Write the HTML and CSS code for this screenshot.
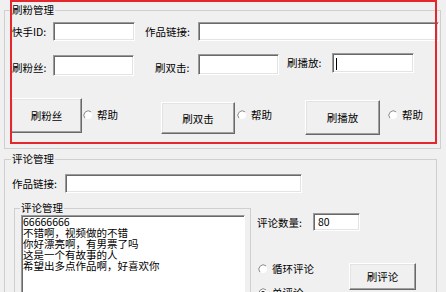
FILE: index.html
```html
<!DOCTYPE html>
<html lang="zh-CN">
<head>
<meta charset="utf-8">
<title>刷粉管理</title>
<link rel="stylesheet" href="styles.css">
</head>
<body>
<div class="page">
  <fieldset class="group group-fans">
    <legend>刷粉管理</legend>
    <div class="row row1">
      <span class="lbl w41">快手ID:</span>
      <span class="input w82 h19"></span>
      <span class="lbl w53 ml10">作品链接:</span>
      <span class="input grow h19"></span>
    </div>
    <div class="row row2">
      <span class="lbl w41 mt8">刷粉丝:</span>
      <span class="input w81 h21 mt2"></span>
      <span class="lbl w43 ml21 mt8">刷双击:</span>
      <span class="input w81 h21 mt1"></span>
      <span class="lbl w45 ml8 mt3">刷播放:</span>
      <span class="input w82 h20"><span class="caret"></span></span>
    </div>
    <div class="row row3">
      <button class="btn b1">刷粉丝</button>
      <span class="radio r1"><svg class="rad" viewBox="0 0 10 10"><circle cx="5" cy="5" r="4" fill="#fff"/><path d="M1.9 8.1 A4.4 4.4 0 0 1 8.1 1.9" fill="none" stroke="#8a8a8a" stroke-width="1"/></svg><span>帮助</span></span>
      <button class="btn b2">刷双击</button>
      <span class="radio r2"><svg class="rad" viewBox="0 0 10 10"><circle cx="5" cy="5" r="4" fill="#fff"/><path d="M1.9 8.1 A4.4 4.4 0 0 1 8.1 1.9" fill="none" stroke="#8a8a8a" stroke-width="1"/></svg><span>帮助</span></span>
      <button class="btn b3">刷播放</button>
      <span class="radio r3"><svg class="rad" viewBox="0 0 10 10"><circle cx="5" cy="5" r="4" fill="#fff"/><path d="M1.9 8.1 A4.4 4.4 0 0 1 8.1 1.9" fill="none" stroke="#8a8a8a" stroke-width="1"/></svg><span>帮助</span></span>
    </div>
  </fieldset>

  <fieldset class="group group-comments">
    <legend>评论管理</legend>
    <div class="row crow1">
      <span class="lbl w53">作品链接:</span>
      <span class="input w237 h19"></span>
    </div>
    <div class="cbody">
      <fieldset class="inner">
        <legend>评论管理</legend>
        <textarea class="memo" readonly>66666666
不错啊，视频做的不错
你好漂亮啊，有男票了吗
这是一个有故事的人
希望出多点作品啊，好喜欢你</textarea>
      </fieldset>
      <div class="side">
        <div class="row count">
          <span class="lbl w56">评论数量:</span>
          <span class="input w47 h18 val">80</span>
        </div>
        <div class="row loop">
          <span class="radio r4"><svg class="rad" viewBox="0 0 10 10"><circle cx="5" cy="5" r="4" fill="#fff"/><path d="M1.9 8.1 A4.4 4.4 0 0 1 8.1 1.9" fill="none" stroke="#8a8a8a" stroke-width="1"/></svg><span>循环评论</span></span>
          <button class="btn b4">刷评论</button>
        </div>
        <div class="row single">
          <span class="radio r5"><svg class="rad" viewBox="0 0 10 10"><circle cx="5" cy="5" r="4" fill="#fff"/><path d="M1.9 8.1 A4.4 4.4 0 0 1 8.1 1.9" fill="none" stroke="#8a8a8a" stroke-width="1"/><circle cx="5" cy="5" r="2" fill="#222"/></svg><span>单评论</span></span>
        </div>
      </div>
    </div>
  </fieldset>

  <div class="highlight"></div>
</div>
</body>
</html>
```

FILE: styles.css
```css
html, body {
  margin: 0;
  padding: 0;
  background: #f0f0f0;
  overflow: hidden;
}
body {
  width: 446px;
  height: 292px;
  font-family: "Noto Sans CJK SC", "Noto Sans", sans-serif;
  font-size: 10.5px;
  color: #000;
}
.page {
  position: relative;
  width: 446px;
  height: 292px;
  overflow: hidden;
}
.group {
  box-sizing: border-box;
  margin: 0 0 0 4px;
  border: 1px solid #cfcfcf;
  min-width: 0;
}
.group legend,
.inner legend {
  margin-left: -1px;
  padding: 0 1px;
  line-height: 14px;
  height: 14px;
  font-size: 10.5px;
}
.group-fans {
  margin-top: 3px;
  width: 437px;
  height: 146px;
  padding: 5px 1px 0 7px;
}
.group-comments {
  margin-top: 3px;
  width: 433px;
  height: 160px;
  padding: 8px 1px 0 7px;
}
.row {
  display: flex;
  align-items: flex-start;
}
.row1 { height: 19px; }
.row2 { height: 24px; margin-top: 12px; }
.row3 { height: 37px; margin-top: 21px; }
.lbl {
  display: block;
  line-height: 14px;
  white-space: nowrap;
  flex: none;
}
.row1 .lbl, .crow1 .lbl { margin-top: 3px; }
.input {
  display: block;
  box-sizing: border-box;
  flex: none;
  background: #fff;
  border-top: 1px solid #9a9a9a;
  border-left: 1px solid #9a9a9a;
  border-right: 1px solid #ffffff;
  border-bottom: 1px solid #ffffff;
  box-shadow: inset 1px 1px 0 #696969, inset -1px -1px 0 #e3e3e3;
  position: relative;
}
.grow { flex: 1 1 auto; }
.caret {
  position: absolute;
  left: 3px;
  top: 4px;
  width: 1px;
  height: 12px;
  background: #000;
}
.val {
  padding-left: 4px;
  line-height: 16px;
  font-size: 10.5px;
}
.w41 { width: 41px; }
.w43 { width: 43px; }
.w45 { width: 45px; }
.w47 { width: 47px; }
.w53 { width: 53px; }
.w56 { width: 56px; }
.w81 { width: 81px; }
.w82 { width: 82px; }
.w237 { width: 237px; }
.h18 { height: 18px; }
.h19 { height: 19px; }
.h20 { height: 20px; }
.h21 { height: 21px; }
.ml8 { margin-left: 8px; }
.ml10 { margin-left: 10px; }
.ml21 { margin-left: 21px; }
.mt1 { margin-top: 1px; }
.mt2 { margin-top: 2px; }
.mt3 { margin-top: 3px; }
.mt8 { margin-top: 8px; }

.btn {
  box-sizing: border-box;
  flex: none;
  margin: 0;
  padding: 0;
  background: #f0f0f0;
  font-family: inherit;
  font-size: 10.5px;
  color: #000;
  border-top: 1px solid #ffffff;
  border-left: 1px solid #ffffff;
  border-right: 1px solid #696969;
  border-bottom: 1px solid #696969;
  box-shadow: inset -1px -1px 0 #a0a0a0, inset 1px 1px 0 #e3e3e3;
}
.b1 { width: 71px; height: 35px; margin-left: -1px; }
.b2 { width: 74px; height: 32px; margin-top: 4px; }
.b3 { width: 75px; height: 35px; margin-top: 2px; }
.b4 { width: 67px; height: 27px; }

.radio {
  display: flex;
  align-items: center;
  flex: none;
  line-height: 14px;
  white-space: nowrap;
}
.rad {
  width: 10px;
  height: 10px;
  margin-right: 4px;
  flex: none;
}
.r1 { width: 78px; margin-left: 1px; margin-top: 10px; }
.r2 { width: 68px; margin-left: 2px; margin-top: 10px; }
.r3 { margin-left: 8px; margin-top: 10px; }
.r4 { width: 91px; margin-left: 1px; margin-top: -1px; }
.r5 { margin-left: 1px; margin-top: -2px; }

.cbody {
  display: flex;
  align-items: flex-start;
  margin-top: 8px;
}
.inner {
  box-sizing: border-box;
  width: 237px;
  height: 120px;
  margin: 0 0 0 2px;
  padding: 0 4px 0 6px;
  border: 1px solid #cfcfcf;
  min-width: 0;
}
.memo {
  display: block;
  box-sizing: border-box;
  width: 224px;
  height: 110px;
  margin: 0;
  padding: 0 0 0 1px;
  resize: none;
  overflow: hidden;
  background: #fff;
  font-family: "Noto Sans CJK SC", "Noto Sans", sans-serif;
  font-size: 10.5px;
  line-height: 11px;
  color: #000;
  border-top: 1px solid #9a9a9a;
  border-left: 1px solid #9a9a9a;
  border-right: 1px solid #ffffff;
  border-bottom: 1px solid #ffffff;
  box-shadow: inset 1px 1px 0 #696969;
  outline: none;
}
.side {
  margin-left: 6px;
  display: flex;
  flex-direction: column;
}
.count { margin-top: 12px; }
.count .lbl { margin-top: 3px; }
.loop { margin-top: 32px; }
.single { margin-top: -2px; }

.highlight {
  position: absolute;
  left: 10px;
  top: 0;
  width: 427px;
  height: 144px;
  box-sizing: border-box;
  border: 2px solid #e5262c;
  pointer-events: none;
}
```
